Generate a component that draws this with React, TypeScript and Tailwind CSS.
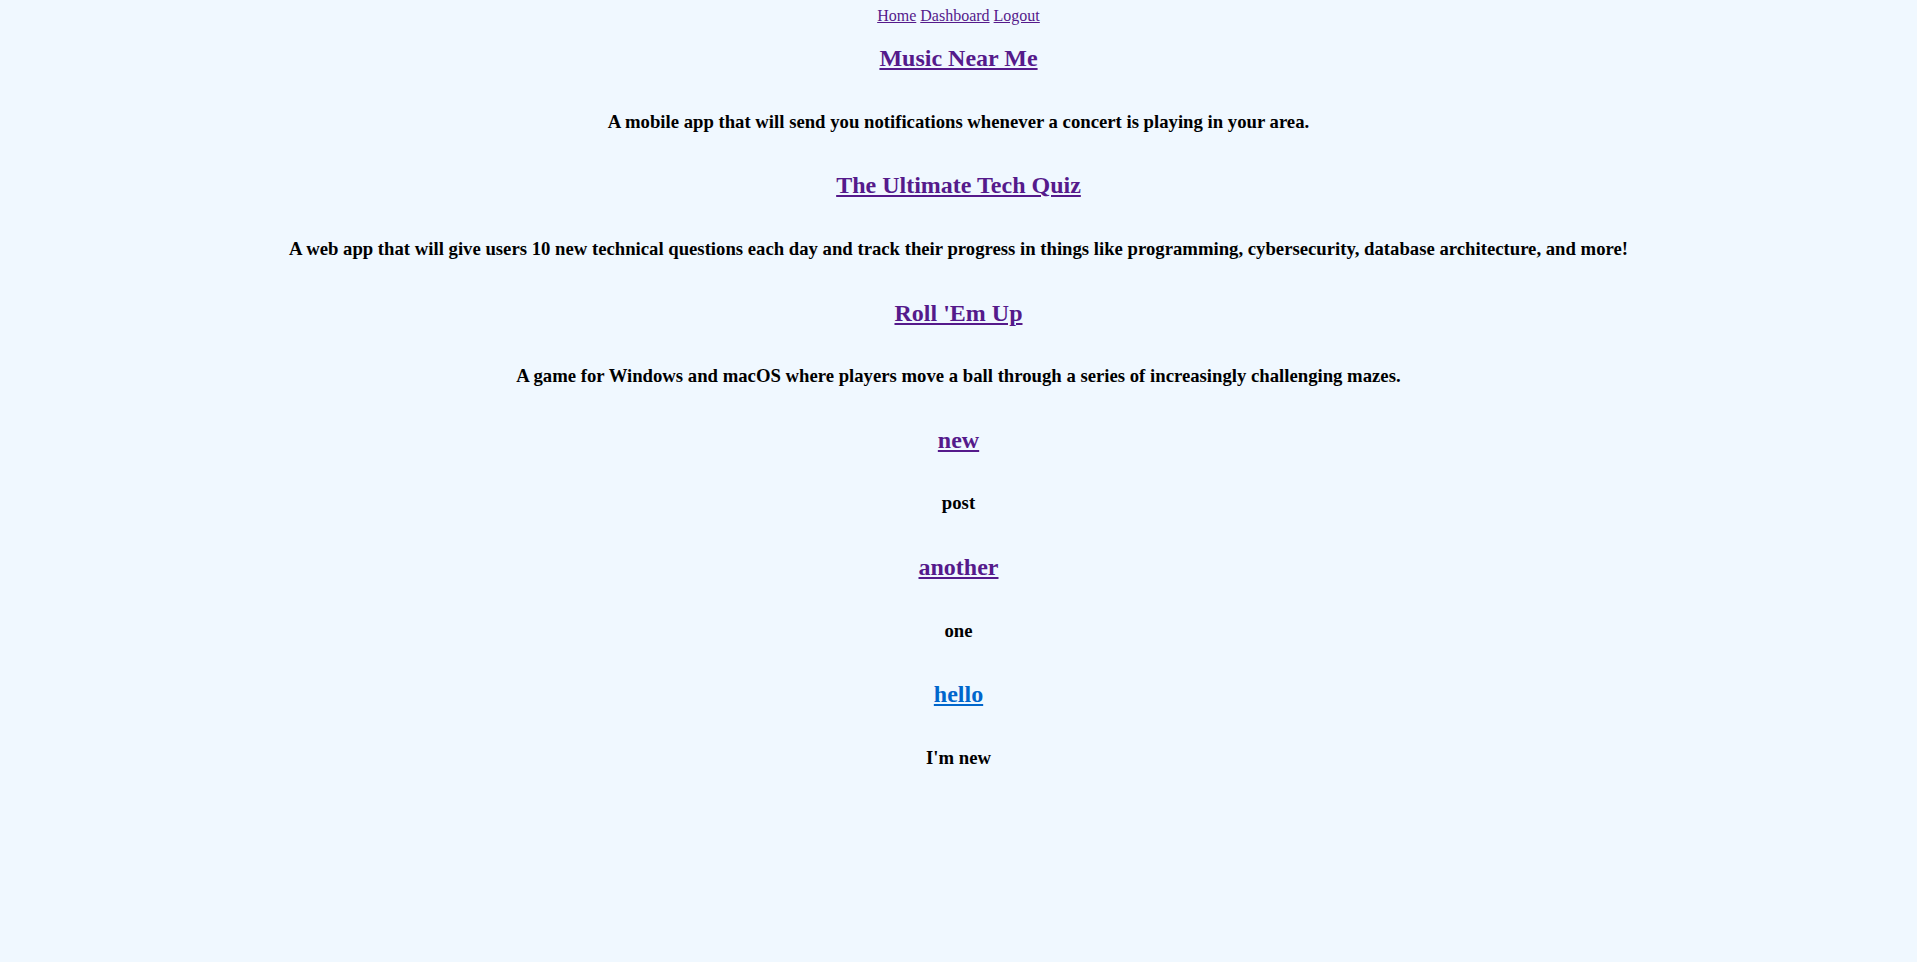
const posts = [
    { title: "Music Near Me", body: "A mobile app that will send you notifications whenever a concert is playing in your area.", visited: true },
    { title: "The Ultimate Tech Quiz", body: "A web app that will give users 10 new technical questions each day and track their progress in things like programming, cybersecurity, database architecture, and more!", visited: true },
    { title: "Roll 'Em Up", body: "A game for Windows and macOS where players move a ball through a series of increasingly challenging mazes.", visited: true },
    { title: "new", body: "post", visited: true },
    { title: "another", body: "one", visited: true },
    { title: "hello", body: "I'm new", visited: false },
];

export default function App() {
    return (
        <div className="min-h-screen flex flex-col bg-[#f0f8ff] pt-[7px] text-black font-['Liberation_Serif','Times_New_Roman',serif]">
            <nav className="text-center text-[16px] leading-[18px]">
                <a href="#" className="underline text-[#551a8b]">Home</a>{" "}
                <a href="#" className="underline text-[#551a8b]">Dashboard</a>{" "}
                <a href="#" className="underline text-[#551a8b]">Logout</a>
            </nav>
            {
                posts.map((post) => (
                    <div className="flex flex-col gap-[38.6px] py-[19.3px] text-center" key={post.title}>
                        <h2 className="text-[24px] leading-[28px] font-bold">
                            <a
                                href="#"
                                className={post.visited ? "underline text-[#551a8b]" : "underline text-[#0066cc]"}
                            >
                                {post.title}
                            </a>
                        </h2>
                        <h3 className="text-[18.72px] leading-[22px] font-bold">{post.body}</h3>
                    </div>
                ))
            }
        </div>
    )
}
